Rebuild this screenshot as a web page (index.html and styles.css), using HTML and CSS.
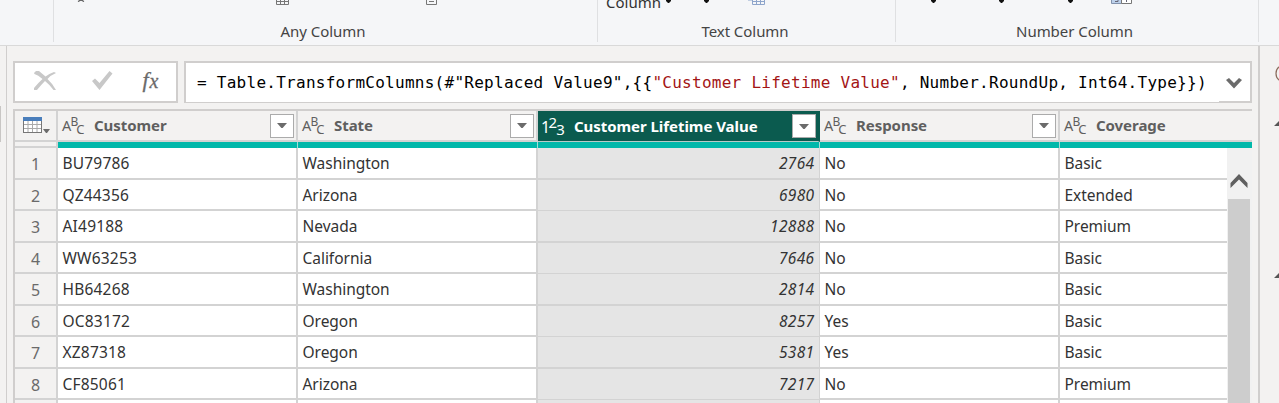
FILE: index.html
```html
<!DOCTYPE html>
<html lang="en">
<head>
<meta charset="utf-8">
<title>Power Query Editor</title>
<link rel="stylesheet" href="styles.css">
</head>
<body>
<header class="ribbon">
  <section class="group g-start"></section>
  <section class="group g-any">
    <svg class="icons" width="543" height="10">
      <path d="M24 1.500L27 0L30 1.500" fill="none" stroke="#555" stroke-width="1.200"/>
      <path d="M222.500 0V4.500H234.500V0M222.500 1.500H234.500M226.500 0V4M230.500 0V4" fill="none" stroke="#777"/>
      <path d="M372.500 0V4.500H382.500V0M375 1.500H380" fill="none" stroke="#777"/>
    </svg>
    <span class="label">Any Column</span>
  </section>
  <section class="group g-text">
    <svg class="icons" width="297" height="10">
      <path d="M68 0H73V1L71 3H70L68 1ZM106 0H111V1L109 3H108L106 1Z" fill="#111"/>
      <path d="M150 0H155M154.500 0V4.500H166.500V0M154 1.500H166M158.500 0V4M162.500 0V4" fill="none" stroke="#8ea5cb"/>
    </svg>
    <span class="cut">Column</span>
    <span class="label">Text Column</span>
  </section>
  <section class="group g-number">
    <svg class="icons" width="362" height="10">
      <path d="M35 0H40V1L38 3H37L35 1ZM103 0H108V1L106 3H105L103 1ZM172 0H177V1L175 3H174L172 1Z" fill="#111"/>
      <path d="M215.500 0V3.500H225.500V0" fill="#bcd0ea" stroke="#8292ad"/>
      <path d="M225.500 0V3.500H235.500V0" fill="#fff" stroke="#777"/>
      <path d="M219 1.500H222V0M230.500 0V2" fill="none" stroke="#667"/>
    </svg>
    <span class="label">Number Column</span>
  </section>
</header>

<div class="workspace">
  <aside class="queries"><i class="handle"></i></aside>
  <main class="editor">
    <div class="formula-row">
      <div class="formula-actions">
        <svg width="160" height="38" viewBox="15 63 160 38">
          <path d="M34 73L36 71L39 71L45.500 76.500Q49 73.500 54 72L56 73Q51 75 47.500 79Q52 83 56 90L53.500 90Q50 85 45 81Q41 85 37 90L34 90L34 88Q38 83 42.500 79Q38 75 34.500 74Z" fill="#c8c8c8"/>
          <path d="M92 81L95 78.500L99.500 83L109.500 71L112.500 73.500L99.500 90Z" fill="#c8c8c8"/>
          <text class="fx" x="142.500" y="86.500" font-size="22">f</text>
          <text class="fx" x="149.500" y="87.500" font-size="20">x</text>
        </svg>
      </div>
      <div class="formula-box">
        <code class="formula">= Table.TransformColumns(#"Replaced Value9",{{<span class="str">"Customer Lifetime Value"</span>, Number.RoundUp, Int64.Type}})</code>
        <span class="expand"><svg width="18" height="13" viewBox="0 0 18 13"><path d="M1 3L4 1L9 6L14 1L17 3L9 11.500Z" fill="#6b6b6b"/></svg></span>
      </div>
    </div>

    <div class="grid">
      <div class="row head">
        <div class="num corner">
          <svg width="30" height="20" viewBox="0 0 30 20">
            <rect x=".5" y=".5" width="18" height="15" fill="#fff" stroke="#777"/>
            <rect width="19" height="4" fill="#4a7ebb"/>
            <path d="M1 7.500H18M1 11.500H18M5 4V15M9.500 4V15M14 4V15" stroke="#aaa" fill="none"/>
            <path d="M20 12H27L24 16H23Z" fill="#6b6b6b"/>
          </svg>
        </div>
        <div class="c1"><svg class="type" viewBox="0 0 26 24"><text x="0" y="17" font-size="14.5">A</text><text x="8.4" y="12.2" font-size="12">B</text><text x="14.3" y="20" font-size="13">C</text></svg><b>Customer</b><button><svg viewBox="0 0 10 5"><path d="M0 0H10L5.600 5H4.400Z"/></svg></button></div>
        <div class="c2"><svg class="type" viewBox="0 0 26 24"><text x="0" y="17" font-size="14.5">A</text><text x="8.4" y="12.2" font-size="12">B</text><text x="14.3" y="20" font-size="13">C</text></svg><b>State</b><button><svg viewBox="0 0 10 5"><path d="M0 0H10L5.600 5H4.400Z"/></svg></button></div>
        <div class="c3"><svg class="type" viewBox="0 0 26 24"><text x="-1" y="18.500" font-size="16">1</text><text x="6.600" y="14" font-size="15">2</text><text x="14.300" y="20.800" font-size="15">3</text></svg><b>Customer Lifetime Value</b><button><svg viewBox="0 0 10 5"><path d="M0 0H10L5.600 5H4.400Z"/></svg></button></div>
        <div class="c4"><svg class="type" viewBox="0 0 26 24"><text x="0" y="17" font-size="14.5">A</text><text x="8.4" y="12.2" font-size="12">B</text><text x="14.3" y="20" font-size="13">C</text></svg><b>Response</b><button><svg viewBox="0 0 10 5"><path d="M0 0H10L5.600 5H4.400Z"/></svg></button></div>
        <div class="c5"><svg class="type" viewBox="0 0 26 24"><text x="0" y="17" font-size="14.5">A</text><text x="8.4" y="12.2" font-size="12">B</text><text x="14.3" y="20" font-size="13">C</text></svg><b>Coverage</b></div>
      </div>
      <div class="row quality"><div class="num"></div><div class="c1"></div><div class="c2"></div><div class="c3"></div><div class="c4"></div><div class="c5"></div></div>
      <div class="body">
        <div class="rows">
          <div class="row"><div class="num">1</div><div class="c1">BU79786</div><div class="c2">Washington</div><div class="c3">2764</div><div class="c4">No</div><div class="c5">Basic</div></div>
          <div class="row"><div class="num">2</div><div class="c1">QZ44356</div><div class="c2">Arizona</div><div class="c3">6980</div><div class="c4">No</div><div class="c5">Extended</div></div>
          <div class="row"><div class="num">3</div><div class="c1">AI49188</div><div class="c2">Nevada</div><div class="c3">12888</div><div class="c4">No</div><div class="c5">Premium</div></div>
          <div class="row"><div class="num">4</div><div class="c1">WW63253</div><div class="c2">California</div><div class="c3">7646</div><div class="c4">No</div><div class="c5">Basic</div></div>
          <div class="row"><div class="num">5</div><div class="c1">HB64268</div><div class="c2">Washington</div><div class="c3">2814</div><div class="c4">No</div><div class="c5">Basic</div></div>
          <div class="row"><div class="num">6</div><div class="c1">OC83172</div><div class="c2">Oregon</div><div class="c3">8257</div><div class="c4">Yes</div><div class="c5">Basic</div></div>
          <div class="row"><div class="num">7</div><div class="c1">XZ87318</div><div class="c2">Oregon</div><div class="c3">5381</div><div class="c4">Yes</div><div class="c5">Basic</div></div>
          <div class="row"><div class="num">8</div><div class="c1">CF85061</div><div class="c2">Arizona</div><div class="c3">7217</div><div class="c4">No</div><div class="c5">Premium</div></div>
          <div class="row last"><div class="num"></div><div class="c1"></div><div class="c2"></div><div class="c3"></div><div class="c4"></div><div class="c5"></div></div>
        </div>
        <div class="scrollbar">
          <svg width="18" height="14" viewBox="0 0 18 14"><path d="M9 0L17.500 9V14L9 5.500L.5 14V9Z" fill="#606060"/></svg>
          <div class="thumb"></div>
        </div>
      </div>
    </div>
  </main>
  <aside class="settings">
    <svg width="19" height="357" viewBox="1260 46 19 357">
      <path d="M1280 66.500Q1276 68.500 1276 73.500Q1276 78.500 1280 80.500" fill="none" stroke="#8a6a5a" stroke-width="1.200"/>
      <path d="M1274 126L1279 121V126ZM1274 278L1279 273V278Z" fill="#555"/>
    </svg>
  </aside>
</div>
</body>
</html>
```
FILE: styles.css
```css
* { box-sizing: border-box; }
body {
  margin: 0;
  width: 1279px;
  height: 403px;
  overflow: hidden;
  background: #f3f2f1;
  color: #333;
  font: 15px/20px "Noto Sans", "Open Sans", sans-serif;
}
svg { display: block; flex: none; }

.ribbon {
  display: flex;
  height: 46px;
  background: #f5f6f8;
  border-bottom: 1px solid #d9d9d9;
}
.group {
  position: relative;
  display: flex;
  flex-direction: column;
  justify-content: space-between;
  align-items: center;
  height: 42px;
  padding-bottom: 1px;
  border-right: 1px solid #dfe0e2;
  color: #444;
}
.g-start { width: 54px; }
.g-any { width: 544px; }
.g-text { width: 298px; }
.g-number { width: 363px; }
.label { white-space: nowrap; letter-spacing: -.05px; }
.g-any .label { margin-left: -5px; }
.g-text .label { margin-left: -3px; }
.g-number .label { margin-left: -5px; }
.cut { position: absolute; left: 8px; top: -8px; color: #333; }

.workspace { display: flex; height: 357px; }
.queries { width: 7px; border-right: 1px solid #d0cecd; padding-top: 60px; }
.handle { display: block; width: 1px; height: 36px; background: #c8c6c4; }
.editor { width: 1251px; padding: 15px 6px 0; }
.settings { width: 21px; border-left: 2px solid #d0cecd; }

.formula-row { display: flex; gap: 6px; height: 42px; }
.formula-actions { width: 165px; background: #fff; border: 2px solid #d0cecd; }
.fx { font-family: "Liberation Serif", serif; font-style: italic; fill: #6a6a6a; stroke: #6a6a6a; stroke-width: .3; }
.formula-box {
  display: flex;
  width: 1068px;
  background: #fff;
  border: 2px solid #d0cecd;
  border-bottom-width: 1px;
}
.formula {
  width: 1033px;
  padding-left: 11px;
  font: 16px/39px "DejaVu Sans Mono", monospace;
  letter-spacing: .267px;
  color: #000;
  white-space: pre;
}
.str { color: #a31515; }
.expand {
  width: 31px;
  padding: 14px 0 0 6px;
  border-bottom: 1px solid #d0cecd;
}

.grid {
  width: 1239px;
  height: 294px;
  margin-top: 6px;
  border-top: 2px solid #d0cecd;
  border-left: 2px solid #d0cecd;
}
.row { display: flex; }
.row > div { flex: none; border-right: 2px solid #d3d3d3; border-bottom: 2px solid #d3d3d3; white-space: nowrap; }
.row > .num { width: 43px; background: #f3f2f1; color: #6a6a6a; font-size: 16px; text-align: center; }
.row > .c1, .row > .c2, .row > .c4 { width: 240px; }
.row > .c3 { width: 282px; }
.row > .c5 { width: 167px; border-right: 0; }

.head > div { display: flex; align-items: center; height: 31px; padding: 0 3px 0 4px; color: #5f5f5f; }
.head > .c5 { width: 192px; }
.head > .c3 { background: #0b5b4f; color: #fff; border-right-color: #0b5b4f; border-bottom: 1px solid #b9cbc8; height: 31px; }
.head > .corner { padding: 2px 0 0 8px; }
.type { width: 26px; height: 24px; fill: currentColor; overflow: visible; }
.head b { margin: -1px 0 0 6px; font-weight: 700; letter-spacing: -.05px; }
.head button {
  display: flex;
  align-items: center;
  justify-content: center;
  width: 24px;
  height: 24px;
  margin: 0 -1px 0 auto;
  padding: 0;
  border: 1px solid #ababab;
  background: #fff;
}
.head button svg { width: 10px; height: 5px; fill: #6b6b6b; }

.quality > div { height: 6px; }
.row.quality > :not(.num) { background: #01b8aa; border-bottom: 0; border-right: 1px solid #a5dcd7; }
.row.quality > .c5 { width: 192px; border-right: 0; }

.body { display: flex; height: 255px; }
.rows { width: 1212px; }
.rows > .row { height: 31px; font-size: 15.5px; letter-spacing: -.03px; }
.rows > .row:nth-child(odd) { height: 32px; }
.rows .row > div { background: #fff; line-height: 31px; }
.rows .row > .c1, .rows .row > .c2, .rows .row > .c4, .rows .row > .c5 { padding-left: 4.5px; }
.rows .row > .c1 { letter-spacing: .2px; }
.rows .row > .num { background: #f3f2f1; line-height: 32px; }
.rows .row > .c3 {
  background: #e5e5e5;
  font-style: italic;
  letter-spacing: .35px;
  text-align: right;
  padding-right: 4.5px;
  border-right-width: 1px;
}
.rows .row:nth-child(even) > .c3 { border-bottom-width: 1px; }
.rows > .row.last { height: 3px; }
.rows > .row.last > div { border-bottom: 0; }

.scrollbar { width: 25px; padding: 26px 2px 0 1px; background: #f1f1f1; }
.scrollbar svg { margin-left: 2px; }
.thumb { height: 204px; margin-top: 11px; background: #cdcdcd; }
```
